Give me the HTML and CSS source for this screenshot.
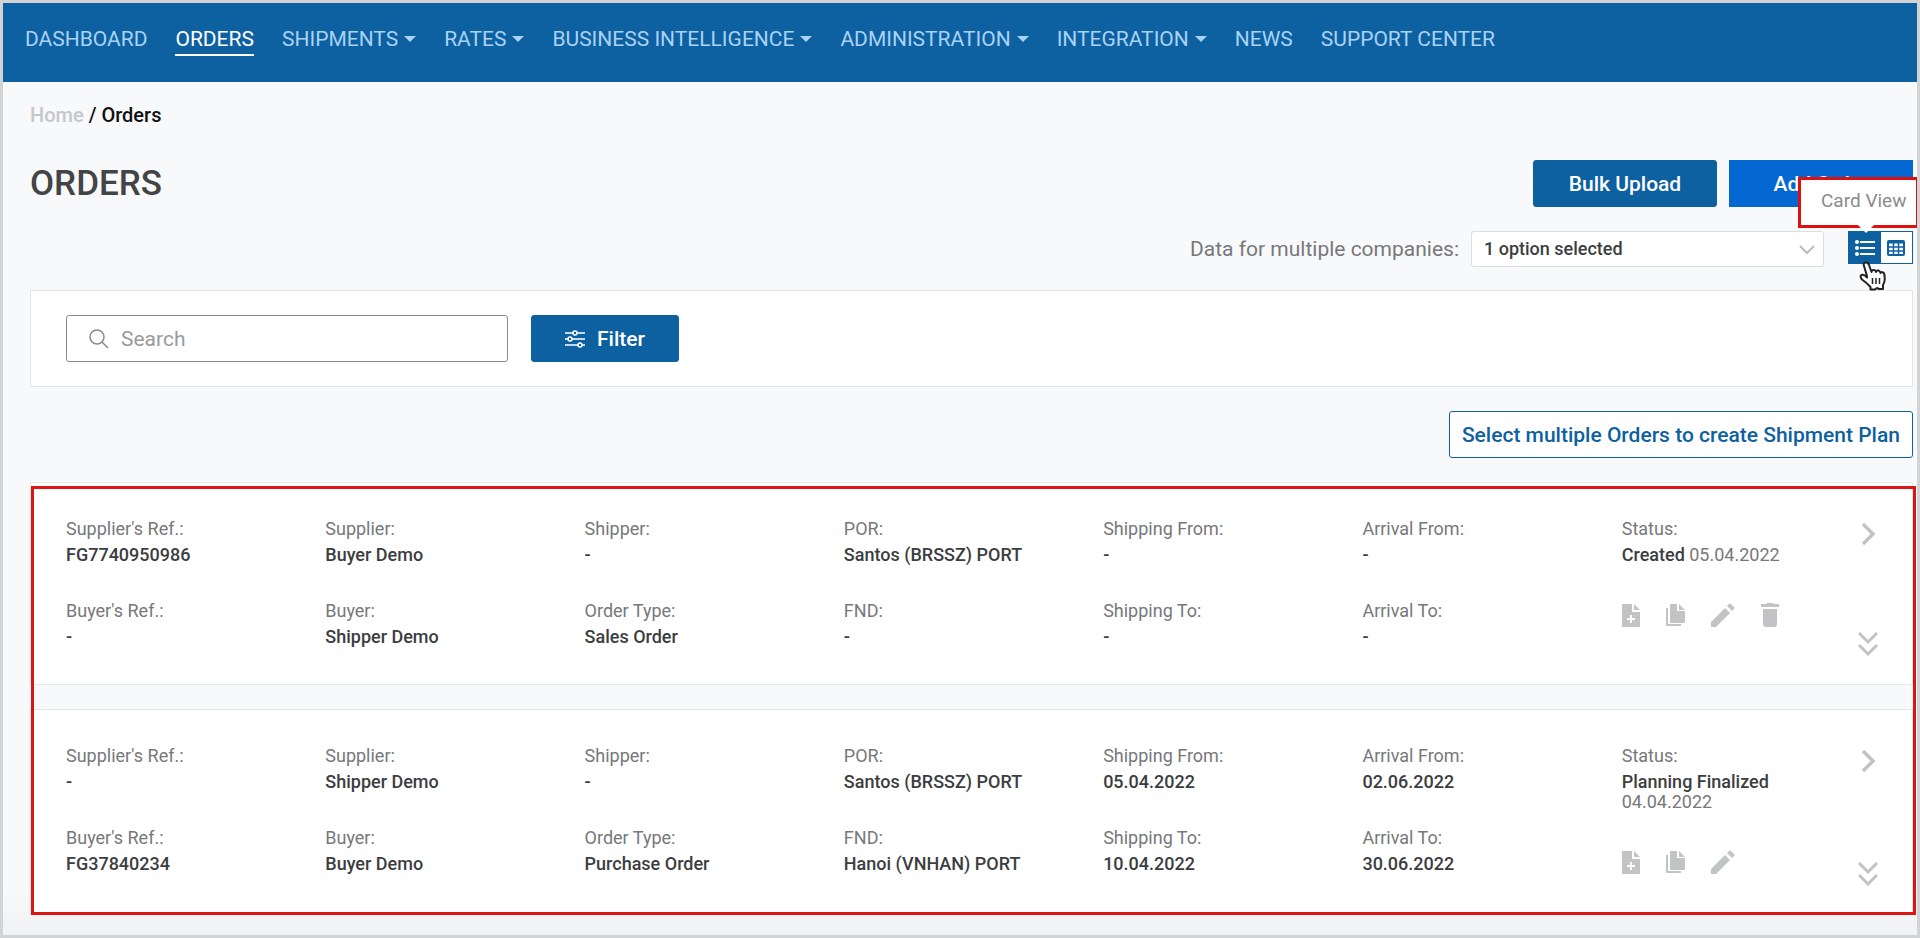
FILE: index.html
```html
<!DOCTYPE html>
<html lang="en">
<head>
  <meta charset="UTF-8">
  <meta name="viewport" content="width=device-width, initial-scale=1.0">
  <title>Orders</title>
  <link rel="stylesheet" href="styles.css">
</head>
<body>
  <!-- Icon shapes shared by the cards -->
  <svg class="sprite" aria-hidden="true">
    <symbol id="icon-add" viewBox="0 0 18 23">
      <path d="M0 0H10V8H18V23H0ZM8 11V14H5V16H8V19H10V16H13V14H10V11Z" fill-rule="evenodd"/>
      <path d="M12 0L18 6H12Z"/>
    </symbol>
    <symbol id="icon-copy" viewBox="0 0 19 23">
      <path d="M5 0H11V7H19V18Q19 19 18 19H5Q4 19 4 18V1Q4 0 5 0Z"/>
      <path d="M13 0L19 6H13Z"/>
      <path d="M0 4H2V20H15V22H1Q0 22 0 21Z"/>
    </symbol>
    <symbol id="icon-edit" viewBox="0 0 24 24">
      <path d="M0 19L14 5L19 10L5 24H0Z"/>
      <path d="M16 3L18 1Q19 0 20 1L23 4Q24 5 23 6L21 8Z"/>
    </symbol>
    <symbol id="icon-delete" viewBox="0 0 18 24">
      <path d="M0 1H5L6 0H12L13 1H18V4H0Z"/>
      <path d="M2 6H16V21Q16 24 13 24H5Q2 24 2 21Z"/>
    </symbol>
    <symbol id="icon-next" viewBox="0 0 14 24">
      <path d="M2 2L12 12L2 22" fill="none" stroke="currentColor" stroke-width="3.5"/>
    </symbol>
    <symbol id="icon-expand" viewBox="0 0 20 24">
      <path d="M1 1L10 10L19 1M1 13L10 22L19 13" fill="none" stroke="currentColor" stroke-width="3"/>
    </symbol>
  </svg>

  <nav class="navbar">
    <a href="#">DASHBOARD</a>
    <a href="#" class="active">ORDERS</a>
    <a href="#" class="dropdown">SHIPMENTS</a>
    <a href="#" class="dropdown">RATES</a>
    <a href="#" class="dropdown">BUSINESS INTELLIGENCE</a>
    <a href="#" class="dropdown">ADMINISTRATION</a>
    <a href="#" class="dropdown">INTEGRATION</a>
    <a href="#">NEWS</a>
    <a href="#">SUPPORT CENTER</a>
  </nav>

  <main class="container">
    <div class="breadcrumb"><a href="#">Home</a> / Orders</div>

    <header class="page-header">
      <h1>ORDERS</h1>
      <button type="button" class="btn">Bulk Upload</button>
      <button type="button" class="btn btn-add">Add Order</button>
    </header>

    <div class="view-bar">
      <label for="companies">Data for multiple companies:</label>
      <div class="select-wrap">
        <select id="companies" name="companies">
          <option>1 option selected</option>
        </select>
        <svg class="select-arrow" width="16" height="10" viewBox="0 0 16 10"><path d="M1 1L8 8L15 1" fill="none" stroke="#bbb" stroke-width="2"/></svg>
      </div>
      <div class="view-toggle">
        <button type="button" class="toggle selected" aria-label="Card View">
          <svg width="20" height="16" viewBox="0 0 20 16" fill="#fff"><circle cx="2" cy="2" r="2"/><circle cx="2" cy="8" r="2"/><circle cx="2" cy="14" r="2"/><path d="M5 1H20V3H5ZM5 7H20V9H5ZM5 13H20V15H5Z"/></svg>
        </button>
        <button type="button" class="toggle" aria-label="Table View">
          <svg width="18" height="16" viewBox="0 0 18 16" fill="none" stroke="#0d61a1"><rect x="1" y="1" width="16" height="14" rx="1" stroke-width="2"/><path d="M1 2.5H17" stroke-width="2"/><path d="M6.5 3V15M11.5 3V15M1 7H17M1 11H17" stroke-width="1.5"/></svg>
        </button>
        <div class="tooltip">Card View</div>
        <svg class="cursor" width="28" height="30" viewBox="0 0 28 30"><path d="M8 15L5 5Q4 2 6.500 1.500Q9 1 10 4L12.500 11Q13 8.500 15 9Q16.500 9 17 11Q17.500 9 19.500 9.500Q21 10 21.500 12Q22 10.500 24 11.500Q25.500 12 25.500 15Q26.500 20 24 24V28H20L18 27L16 28.500H11.500V26Q8 22 3 18.500Q0.500 15.500 2.500 14Q5 13 8 16.500Z" fill="#fff" stroke="#222" stroke-width="2" stroke-linejoin="round"/><path d="M13.500 17V23M17 17V23M20.500 17V23" stroke="#222" stroke-width="1.500"/></svg>
      </div>
    </div>

    <form class="filter-panel">
      <div class="search">
        <svg width="20" height="20" viewBox="0 0 20 20" fill="none" stroke="#8a8a8a" stroke-width="1.5"><circle cx="8" cy="8" r="7"/><path d="M13 13L19 19"/></svg>
        <input type="text" name="search" placeholder="Search" aria-label="Search">
      </div>
      <button type="button" class="btn btn-filter">
        <svg width="20" height="18" viewBox="0 0 20 18" fill="none" stroke="#fff" stroke-width="1.5"><path d="M0 3H8M12 3H20M0 9H3M7 9H20M0 15H13M17 15H20"/><circle cx="10" cy="3" r="2"/><circle cx="5" cy="9" r="2"/><circle cx="15" cy="15" r="2"/></svg>
        Filter
      </button>
    </form>

    <div class="plan-bar">
      <button type="button" class="btn btn-outline">Select multiple Orders to create Shipment Plan</button>
    </div>

    <section class="orders">
      <article class="card">
        <dl>
          <div><dt>Supplier's Ref.:</dt><dd>FG7740950986</dd></div>
          <div><dt>Supplier:</dt><dd>Buyer Demo</dd></div>
          <div><dt>Shipper:</dt><dd>-</dd></div>
          <div><dt>POR:</dt><dd>Santos (BRSSZ) PORT</dd></div>
          <div><dt>Shipping From:</dt><dd>-</dd></div>
          <div><dt>Arrival From:</dt><dd>-</dd></div>
          <div><dt>Buyer's Ref.:</dt><dd>-</dd></div>
          <div><dt>Buyer:</dt><dd>Shipper Demo</dd></div>
          <div><dt>Order Type:</dt><dd>Sales Order</dd></div>
          <div><dt>FND:</dt><dd>-</dd></div>
          <div><dt>Shipping To:</dt><dd>-</dd></div>
          <div><dt>Arrival To:</dt><dd>-</dd></div>
        </dl>
        <div class="status">
          <div class="status-label">Status:</div>
          <div class="status-value"><strong>Created</strong> 05.04.2022</div>
          <div class="actions">
            <button type="button" aria-label="Add"><svg width="18" height="23"><use href="#icon-add"/></svg></button>
            <button type="button" aria-label="Copy"><svg width="19" height="23"><use href="#icon-copy"/></svg></button>
            <button type="button" aria-label="Edit"><svg width="24" height="24"><use href="#icon-edit"/></svg></button>
            <button type="button" aria-label="Delete"><svg width="18" height="24"><use href="#icon-delete"/></svg></button>
          </div>
        </div>
        <div class="card-nav">
          <button type="button" aria-label="Open"><svg width="14" height="24"><use href="#icon-next"/></svg></button>
          <button type="button" aria-label="Expand"><svg width="20" height="24"><use href="#icon-expand"/></svg></button>
        </div>
      </article>

      <article class="card">
        <dl>
          <div><dt>Supplier's Ref.:</dt><dd>-</dd></div>
          <div><dt>Supplier:</dt><dd>Shipper Demo</dd></div>
          <div><dt>Shipper:</dt><dd>-</dd></div>
          <div><dt>POR:</dt><dd>Santos (BRSSZ) PORT</dd></div>
          <div><dt>Shipping From:</dt><dd>05.04.2022</dd></div>
          <div><dt>Arrival From:</dt><dd>02.06.2022</dd></div>
          <div><dt>Buyer's Ref.:</dt><dd>FG37840234</dd></div>
          <div><dt>Buyer:</dt><dd>Buyer Demo</dd></div>
          <div><dt>Order Type:</dt><dd>Purchase Order</dd></div>
          <div><dt>FND:</dt><dd>Hanoi (VNHAN) PORT</dd></div>
          <div><dt>Shipping To:</dt><dd>10.04.2022</dd></div>
          <div><dt>Arrival To:</dt><dd>30.06.2022</dd></div>
        </dl>
        <div class="status">
          <div class="status-label">Status:</div>
          <div class="status-value"><strong>Planning Finalized</strong> 04.04.2022</div>
          <div class="actions">
            <button type="button" aria-label="Add"><svg width="18" height="23"><use href="#icon-add"/></svg></button>
            <button type="button" aria-label="Copy"><svg width="19" height="23"><use href="#icon-copy"/></svg></button>
            <button type="button" aria-label="Edit"><svg width="24" height="24"><use href="#icon-edit"/></svg></button>
          </div>
        </div>
        <div class="card-nav">
          <button type="button" aria-label="Open"><svg width="14" height="24"><use href="#icon-next"/></svg></button>
          <button type="button" aria-label="Expand"><svg width="20" height="24"><use href="#icon-expand"/></svg></button>
        </div>
      </article>
    </section>
  </main>
</body>
</html>
```
FILE: styles.css
```css
* {
  box-sizing: border-box;
}
body {
  margin: 0;
  min-height: 100vh;
  border: 3px solid #d1d3d5;
  background: linear-gradient(to top, #eff1f3, #f8f9fb 50px);
  font-family: Roboto, sans-serif;
  font-size: 18px;
  color: #3c3d3f;
}
button, input, select {
  font-family: inherit;
}
button {
  cursor: pointer;
}
.sprite {
  display: none;
}

/* Navigation */
.navbar {
  display: flex;
  gap: 28px;
  height: 79px;
  padding: 22px 22px 0;
  background-color: #0d61a1;
}
.navbar a {
  height: 31px;
  line-height: 29px;
  font-size: 21px;
  color: #a9d2f5;
  text-decoration: none;
  white-space: nowrap;
}
.navbar .active {
  color: #fff;
  border-bottom: 2px solid #fff;
}
.navbar .dropdown::after {
  content: "";
  display: inline-block;
  margin-left: 6px;
  vertical-align: 4px;
  border-top: 6px solid #a9d2f5;
  border-left: 6px solid transparent;
  border-right: 6px solid transparent;
}

.container {
  padding: 20px 4px 20px 27px;
}
.breadcrumb {
  line-height: 26px;
  font-size: 20px;
  font-weight: 500;
  color: #111;
}
.breadcrumb a {
  color: #c6c7c9;
  text-decoration: none;
}

/* Title and main buttons */
.page-header {
  display: flex;
  align-items: center;
  gap: 12px;
  margin-top: 32px;
}
h1 {
  margin: 0 auto 0 0;
  line-height: 47px;
  font-size: 35px;
  font-weight: 500;
  color: #434446;
}
.btn {
  min-width: 184px;
  height: 47px;
  padding: 0 12px;
  border: 1px solid #0d61a1;
  border-radius: 3px;
  background-color: #0d61a1;
  color: #fff;
  font-size: 21px;
  font-weight: 500;
}
.btn-add {
  border-color: #0568d2;
  border-radius: 0;
  background-color: #0568d2;
}
.btn-outline {
  background-color: #fff;
  color: #0d61a1;
}
.btn-filter {
  display: flex;
  align-items: center;
  justify-content: center;
  gap: 12px;
  min-width: 148px;
}

/* Company select and view toggle */
.view-bar {
  display: flex;
  justify-content: flex-end;
  margin-top: 24px;
}
.view-bar label {
  margin-right: 12px;
  line-height: 36px;
  font-size: 21px;
  color: #77787a;
}
.select-wrap {
  position: relative;
  width: 353px;
}
.select-wrap select {
  width: 100%;
  height: 36px;
  padding: 0 12px 2px;
  border: 1px solid #dcdddf;
  border-radius: 3px;
  background-color: #fff;
  color: #3c3d3f;
  font-size: 18px;
  font-weight: 500;
  appearance: none;
}
.select-arrow {
  position: absolute;
  right: 9px;
  top: 14px;
  pointer-events: none;
}
.view-toggle {
  position: relative;
  display: flex;
  width: 65px;
  height: 33px;
  margin-left: 24px;
  border: 1px solid #0d61a1;
}
.toggle {
  display: flex;
  flex: 1;
  align-items: center;
  justify-content: center;
  padding: 0;
  border: 0;
  background-color: #fff;
}
.toggle.selected {
  background-color: #0d61a1;
}
.tooltip {
  position: absolute;
  right: -7px;
  bottom: 35px;
  width: 121px;
  height: 51px;
  padding-left: 20px;
  border: 3px solid #e01010;
  background-color: #fff;
  line-height: 42px;
  font-size: 19px;
  color: #8a8b8d;
  white-space: nowrap;
}
.tooltip::after {
  content: "";
  position: absolute;
  left: 55px;
  top: 43px;
  border-top: 10px solid #fff;
  border-left: 10px solid transparent;
  border-right: 10px solid transparent;
}
.cursor {
  position: absolute;
  left: 10px;
  top: 29px;
}

/* Search and filter */
.filter-panel {
  display: flex;
  gap: 23px;
  margin-top: 23px;
  padding: 24px 35px;
  border: 1px solid #e4e5e7;
  background-color: #fff;
}
.search {
  display: flex;
  align-items: center;
  gap: 12px;
  width: 442px;
  height: 47px;
  padding: 0 22px;
  border: 1px solid #8a8a8a;
  border-radius: 3px;
}
.search input {
  flex: 1;
  padding: 0;
  border: 0;
  outline: 0;
  font-size: 21px;
}
.search input::placeholder {
  color: #9a9a9a;
}
.plan-bar {
  display: flex;
  justify-content: flex-end;
  margin-top: 24px;
}

/* Order cards */
.orders {
  position: relative;
  display: grid;
  gap: 24px;
  margin-top: 24px;
}
.orders::after {
  content: "";
  position: absolute;
  top: 4px;
  right: -3px;
  bottom: 0;
  left: 1px;
  border: 3px solid #dc1414;
  pointer-events: none;
}
.card {
  position: relative;
  display: grid;
  grid-template-columns: 6fr 1fr;
  padding: 34px 31px 33px 35px;
  border: 1px solid #e6e7e9;
  background-color: #fff;
}
.card dl {
  display: grid;
  grid-template-columns: repeat(6, 1fr);
  row-gap: 30px;
  align-content: start;
  margin: 0;
}
dt, .status-label {
  line-height: 24px;
  color: #77787a;
}
dd {
  margin: 0;
  line-height: 28px;
  font-weight: 500;
}
.status {
  padding-right: 40px;
}
.status-value {
  padding-top: 4px;
  line-height: 20px;
  color: #77787a;
}
.status strong {
  font-weight: 500;
  color: #3c3d3f;
}
.actions {
  display: flex;
  gap: 26px;
  align-items: center;
  margin: 38px 0 7px;
}
.actions button, .card-nav button {
  display: flex;
  padding: 0;
  border: 0;
  background: none;
  color: #c2c3c5;
  fill: #c2c3c5;
}
.card-nav {
  position: absolute;
  top: 39px;
  right: 34px;
  bottom: 28px;
  display: flex;
  flex-direction: column;
  align-items: center;
  justify-content: space-between;
}
```
